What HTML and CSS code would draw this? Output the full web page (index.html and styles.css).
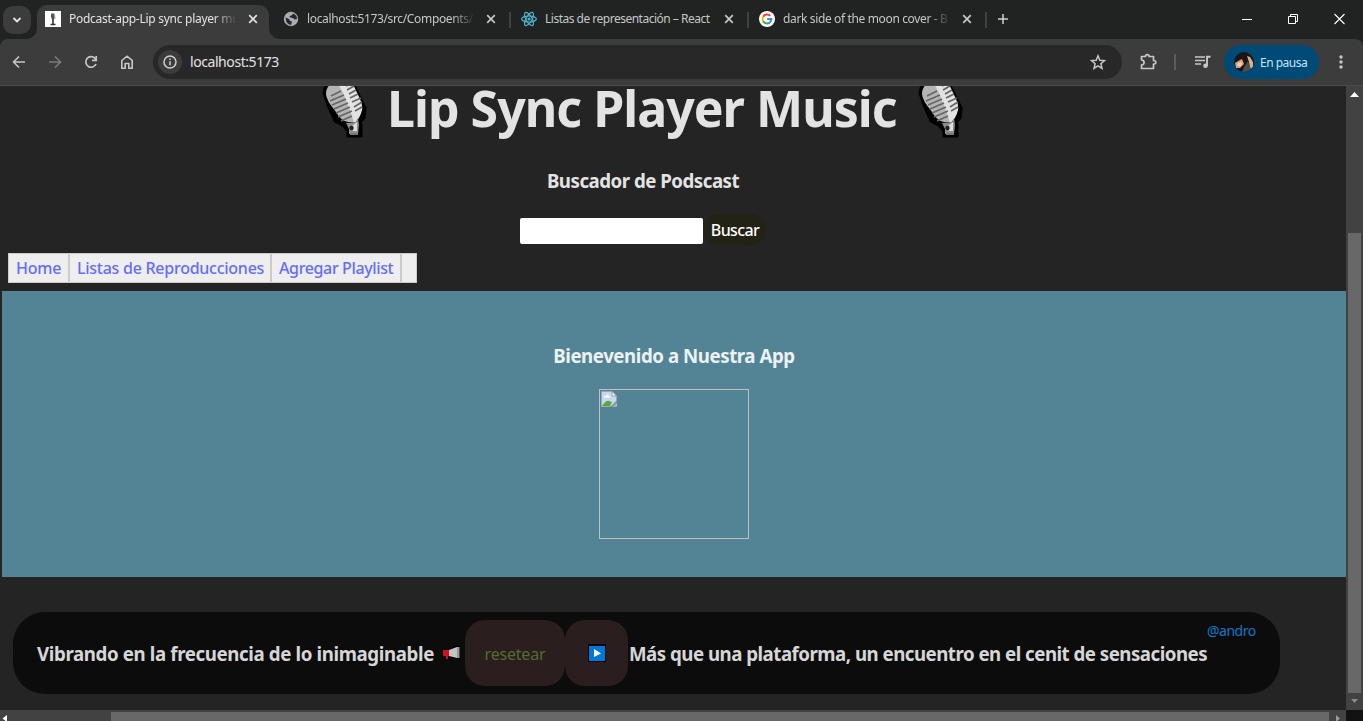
FILE: index.html
```html
<!DOCTYPE html>
<html lang="es">
<head>
<meta charset="utf-8">
<title>Podcast-app-Lip sync player music</title>
<link rel="stylesheet" href="styles.css">
</head>
<body>
<svg class="defs" width="0" height="0">
  <symbol id="x" viewBox="0 0 10 10"><path d="M1.2 1.2 8.8 8.8M8.800 1.200 1.200 8.800" fill="none" stroke="currentColor" stroke-width="1.700"/></symbol>
  <symbol id="mic" viewBox="0 0 46 66">
    <path d="M13 8 29 8 35 20 43 36 42 46 38 50 39 53V64H26V59L22 54 13 49 6 33 2 21 4 12Z" fill="#000" stroke="#000" stroke-width="3" stroke-linejoin="round"/>
    <path d="M4 22C4 12 13 9 18 10L24 20 31 35 34 50H26Q19 49 14 40Q4 28 4 22Z" fill="#b4b4b4"/>
    <path d="M14 8 29 8 38 27Q41 34 40 38Q38 47 32 51L28 38 21 21Z" fill="#e2e2e2"/>
    <path d="m24 51 10-1 2-4 1 7-1 9h-9v-5Z" fill="#8d8d8d"/><path d="m30 54 5-4v9h-4Z" fill="#ddd"/><circle cx="29.500" cy="56" r="2.200" fill="#222"/><path d="M28 61h8v2h-8Z" fill="#777"/>
    <path d="m9 24 10-5M8 29l14-6M10 33l14-6M12 37l14-6M14 41l14-6M16 45l14-6M19 49l11-5M24 14l6-3M25 18l7-4M27 22l7-4M28 26l8-4M30 30l9-4M32 35l8-5M33 39l7-4" stroke="#666" stroke-width="1.700"/>
  </symbol>
</svg>
<div class="tabstrip">
  <div class="tabsearch"><svg width="10" height="8" viewBox="0 0 10 8"><path d="m1.500 2 3.500 3.500L8.500 2" fill="none" stroke="#e3e3e3" stroke-width="1.800"/></svg></div>
  <div class="tab active">
    <svg class="fav" viewBox="0 0 16 16"><path fill="#fff" d="M0 0h16v16H0z"/><path d="M6 2.500h3l1 3-1 3H7L6 6Z" fill="#555"/><path d="M8 8v5M5.500 13.500h5" stroke="#333" stroke-width="1.600"/><path d="M9.500 3 10 8" stroke="#aaa"/></svg>
    <span class="label l1">Podcast-app-Lip sync player mu</span><svg class="x"><use href="#x"/></svg>
  </div>
  <div class="tab">
    <svg class="fav" viewBox="0 0 16 16"><circle cx="8" cy="8" r="7.200" fill="#a9adb3"/><path d="M2.500 6.500 6 8l1 2 2 .5-1 3.500q-5-.500-5.500-7.500ZM8 2l2 .5-1 1.800L6.500 5 7 6.500l3 .500 1.500 1.500 2.500-.500Q14 3 8 2Z" fill="#252827"/></svg>
    <span class="label l2">localhost:5173/src/Compoents/</span><svg class="x"><use href="#x"/></svg>
  </div>
  <i class="sep"></i>
  <div class="tab">
    <svg class="fav" viewBox="0 0 16 16" fill="none" stroke="#4fb3cb" stroke-width="1.200"><ellipse cx="8" cy="8" rx="7.400" ry="3"/><ellipse cx="8" cy="8" rx="7.400" ry="3" transform="rotate(60 8 8)"/><ellipse cx="8" cy="8" rx="7.400" ry="3" transform="rotate(120 8 8)"/><circle cx="8" cy="8" r="1" fill="#4fb3cb"/></svg>
    <span class="label l3">Listas de representación – React</span><svg class="x"><use href="#x"/></svg>
  </div>
  <i class="sep"></i>
  <div class="tab">
    <svg class="fav" viewBox="0 0 16 16" fill="none" stroke-width="2"><circle cx="8" cy="8" r="8" fill="#fff"/><path d="M4.200 5.800A4.400 4.400 0 0 1 11.200 4.900" stroke="#ea4335"/><path d="M4.200 5.800a4.400 4.400 0 0 0 0 4.400" stroke="#fbbc05"/><path d="M4.200 10.200a4.400 4.400 0 0 0 6.600 1.300" stroke="#34a853"/><path d="M10.800 11.500Q12.400 10 12.400 8H8.200" stroke="#4285f4"/></svg>
    <span class="label l4">dark side of the moon cover - B</span><svg class="x"><use href="#x"/></svg>
  </div>
  <i class="sep"></i>
  <svg class="plus" width="12" height="12" viewBox="0 0 12 12"><path d="M6 1v10M1 6h10" stroke="#d0d2d1" stroke-width="1.500"/></svg>
  <div class="winbtns">
    <svg width="10" height="12" viewBox="0 0 10 12"><path d="M0 6.500h10" stroke="#fff"/></svg>
    <svg width="10" height="12" viewBox="0 0 10 12" fill="none" stroke="#fff"><path d="M.5 3.500h7v7h-7zM2.500 3.500v-2h7v7h-2"/></svg>
    <svg width="11" height="12" viewBox="0 0 11 12"><path d="m.5 1 10 10m0-10-10 10" stroke="#fff" stroke-width="1.100"/></svg>
  </div>
</div>
<div class="toolbar">
  <div class="navicons">
    <svg width="14" height="14" viewBox="0 0 14 14" fill="none" stroke="#c7c7c7" stroke-width="1.600"><path d="M13 7H2M7 1.500 1.500 7 7 12.500"/></svg>
    <svg width="14" height="14" viewBox="0 0 14 14" fill="none" stroke="#7b7b7b" stroke-width="1.600"><path d="M1 7h11M7 1.500 12.500 7 7 12.500"/></svg>
    <svg width="14" height="14" viewBox="0 0 14 14" fill="none" stroke="#c7c7c7" stroke-width="1.700"><path d="M12 9A5.300 5.300 0 1 1 11 3.300L12.300 5"/><path d="M12.200 1v4.300H8"/></svg>
    <svg width="14" height="14" viewBox="0 0 14 14" fill="none" stroke="#c7c7c7" stroke-width="1.600"><path d="M1.800 5.500 7 1.200l5.200 4.300v7.700H8.800V8.500H5.200v4.700H1.800Z"/></svg>
  </div>
  <div class="omnibox">
    <div class="info"><svg width="14" height="14" viewBox="0 0 14 14" fill="none" stroke="#d0d0d0" stroke-width="1.500"><circle cx="7" cy="7" r="6"/><path d="M7 6.200v4M7 3.500v1.500"/></svg></div>
    <span class="url">localhost:5173</span>
    <svg class="star" width="16" height="16" viewBox="0 0 16 16" fill="none" stroke="#c7c7c7" stroke-width="1.500"><path d="m8 1.800 1.800 4.400 4.700.4-3.600 3.100 1.100 4.600L8 11.800l-4 2.500 1.100-4.600L1.500 6.600l4.700-.4Z"/></svg>
  </div>
  <svg class="ext" width="17" height="17" viewBox="0 0 17 17" fill="none" stroke="#c7c7c7" stroke-width="1.700"><path d="M1.500 3.500H5.500a1.800 1.800 0 0 1 3.600 0h4.400v4q2.300 0 2.300 1.800T13.500 11v4.500h-12V12q2.600-.500 2.600-2.600T1.500 7Z" stroke-linejoin="round"/></svg>
  <i class="tsep"></i>
  <svg class="media" width="16" height="14" viewBox="0 0 16 14"><path d="M0 2h10M0 5.500h10M0 9h6" stroke="#c7c7c7" stroke-width="1.600"/><path d="M12 11V1.800h3.500" fill="none" stroke="#c7c7c7" stroke-width="1.900"/><circle cx="10.500" cy="10.700" r="2.300" fill="#c7c7c7"/></svg>
  <div class="profile">
    <svg width="20" height="20" viewBox="0 0 20 20"><clipPath id="c"><circle cx="10" cy="10" r="10"/></clipPath><g clip-path="url(#c)"><path fill="#1b1517" d="M0 0h20v20H0z"/><path d="M1 11 6 8l2-1 2 5-4 4H2Z" fill="#d9a083"/><path d="m4 11 4-1-1 4H3Z" fill="#f3d0b8"/><path d="m13 4 3 1 3 5v6l-3 1-1-7Z" fill="#d9b087"/><path d="M10 15l4-6 3 8-3 3H8Z" fill="#4b4f53"/></g></svg>
    <span>En pausa</span>
  </div>
  <svg class="dots" width="4" height="14" viewBox="0 0 4 14" fill="#c7c7c7"><circle cx="2" cy="2" r="1.700"/><circle cx="2" cy="7" r="1.700"/><circle cx="2" cy="12" r="1.700"/></svg>
</div>
<div class="window">
  <main class="page">
    <header class="header">
      <h1><svg width="46" height="66"><use href="#mic"/></svg><span>Lip Sync Player Music</span><svg width="46" height="66"><use href="#mic"/></svg></h1>
      <h3><span class="t-find">Buscador de Podscast</span></h3>
      <form class="search"><input type="text" aria-label="Buscar"><button type="button">Buscar</button></form>
    </header>
    <nav class="nav"><a class="n1">Home</a><a class="n2">Listas de Reproducciones</a><a class="n3">Agregar Playlist</a><a class="n4"></a></nav>
    <section class="panel">
      <h3><span class="t-welcome">Bienevenido a Nuestra App</span></h3>
      <div class="cover"><svg width="16" height="16" viewBox="0 0 16 16"><path d="M.5.500H11L15.500 5v5L10 15.500H.5Z" fill="#c5d9f6" stroke="#a7a7a7"/><path d="M1 15q4-6 7-5l3 1-2 4Z" fill="#56aa38"/><path d="M3 6q0-2 2-1 1-3 3 0 2 0 1 1.500H3Z" fill="#fff"/><path d="M11 .5V5h4.500Z" fill="#fff" stroke="#999"/><path d="m12 15.500 3.500-3.500v3.500Z" fill="#8fc27a" stroke="#b0b0b0"/></svg></div>
    </section>
    <footer class="player">
      <span class="p1">Vibrando en la frecuencia de lo inimaginable</span>
      <svg class="horn" width="20" height="16" viewBox="0 0 20 16"><path d="M1 4h6L16 0h3v14h-4l-7-2v3H4l-1-4H1Z" fill="#000"/><path d="M2 5h6v6H7v3H5v-3H2Z" fill="#d1101d"/><path d="m8 5 8-3v11l-8-2Z" fill="#c4c4c4"/><path d="M16 2h2.500v11H16Z" fill="#999"/></svg>
      <button class="reset" type="button"><span>resetear</span></button><button class="play" type="button" aria-label="play"><svg width="18" height="18" viewBox="0 0 18 18"><path d="M0 0h18v18H0z"/><path d="M1 2h16v15H1z" fill="#0078d7"/><path d="m6 5 7 4.500L6 13Z" fill="#fff"/></svg></button>
      <span class="p2">Más que una plataforma, un encuentro en el cenit de sensaciones</span>
      <a class="author">@andro</a>
    </footer>
  </main>
  <div class="vbar"><svg width="17" height="17"><path d="m4 11 4.500-5 4.500 5Z" fill="#fff"/></svg><i></i><svg width="17" height="17"><path d="m5 6 3.500 4L12 6Z" fill="#8b8b8b"/></svg></div>
  <div class="hbar"><svg width="17" height="11"><path d="M7 5v7L2.500 8.500Z" fill="#fff"/></svg><i></i><svg width="17" height="11"><path d="M7 5v7L11 8.500Z" fill="#999"/></svg></div>
  <div class="corner"></div>
</div>
</body>
</html>
```
FILE: styles.css
```css
* { box-sizing: border-box; }
body { margin: 0; width: 1363px; height: 721px; overflow: hidden; background: linear-gradient(#202322 60px, #242424 60px); color: #e3e3e3; font-family: "Noto Sans", "Open Sans", sans-serif; display: flex; flex-direction: column; }
svg { display: block; flex: none; }
.defs { position: absolute; }
h1, h3 { margin: 0; }

.tabstrip { height: 39px; flex: none; background: #202322; display: flex; align-items: center; padding-left: 3px; }
.tabsearch { width: 28px; height: 28px; margin-right: 6px; border-radius: 10px; background: #3c3c3c; display: flex; align-items: center; justify-content: center; }
.tab { width: 232px; height: 34px; padding: 0 11px 6px 8px; display: flex; align-items: center; align-self: flex-end; color: #c5c7c6; }
.tab.active { background: #3c3c3c; border-radius: 10px 10px 0 0; color: #e3e3e3; margin-right: 6px; position: relative; }
.tab.active::before, .tab.active::after { content: ""; position: absolute; bottom: 0; width: 10px; height: 10px; }
.tab.active::before { left: -10px; background: radial-gradient(circle at 0 0, transparent 9.5px, #3c3c3c 10px); }
.tab.active::after { right: -10px; background: radial-gradient(circle at 100% 0, transparent 9.5px, #3c3c3c 10px); }
.fav { width: 16px; height: 16px; margin-right: 8px; }
.label { width: 170px; font-size: 12px; line-height: 18px; white-space: nowrap; -webkit-mask-image: linear-gradient(90deg, #000 145px, transparent 168px); mask-image: linear-gradient(90deg, #000 145px, transparent 168px); }
.l1 { letter-spacing: -.27px; }
.l2 { letter-spacing: -.35px; }
.l3 { letter-spacing: -.5px; -webkit-mask-image: none; mask-image: none; }
.l4 { letter-spacing: -.36px; }
.x { width: 10px; height: 10px; margin-left: auto; }
.sep { width: 2px; height: 16px; background: #404241; margin: 0 2px; }
.plus { margin-left: 8px; margin-top: -1px; }
.winbtns { margin-left: auto; display: flex; gap: 36px; padding-right: 18px; margin-top: -1px; }

.toolbar { height: 47px; flex: none; background: #3c3c3c; border-bottom: 1px solid #4a4a4a; border-radius: 8px 8px 0 0; display: flex; align-items: center; padding-left: 12px; }
.navicons { display: flex; gap: 22px; }
.omnibox { width: 969px; height: 34px; margin-left: 19px; border-radius: 17px; background: #282828; display: flex; align-items: center; padding: 0 16px 0 5px; }
.info { width: 24px; height: 24px; border-radius: 50%; background: #3c3c3c; display: flex; align-items: center; justify-content: center; }
.url { margin-left: 8px; font-size: 14px; line-height: 20px; letter-spacing: -.43px; }
.star { margin-left: auto; }
.ext { margin-left: 18px; margin-top: -2px; }
.tsep { width: 2px; height: 16px; background: #5c5c5c; margin-left: 17px; }
.media { margin-left: 19px; }
.profile { width: 95px; height: 34px; margin-left: 13px; border-radius: 17px; background: #004a77; color: #c2e7ff; font-size: 12px; letter-spacing: -.5px; display: flex; align-items: center; gap: 6px; padding-left: 10px; white-space: nowrap; }
.dots { margin-left: 20px; }

.window { flex: 1; min-height: 0; display: grid; grid-template: 624px 11px / 1346px 17px; }
.page { overflow: hidden; background: #242424; }
.header { width: 1286px; text-align: center; }
.header h1 { height: 41px; font-size: 50px; line-height: 44px; letter-spacing: -.97px; display: flex; justify-content: center; gap: 20px; white-space: nowrap; }
.header h1 svg { margin-top: -14px; }
.header h1 span { width: 510px; text-align: left; text-indent: -1px; }
h3 { font-size: 18.7px; line-height: 28px; white-space: nowrap; }
.header h3 { margin-top: 40px; }
.t-find { letter-spacing: -.5px; }
.t-welcome { letter-spacing: -.45px; }
.search { height: 31px; margin-top: 19px; display: flex; align-items: center; justify-content: center; }
.search input { width: 183px; height: 26px; border: 0; border-radius: 2px; padding: 0; background: #fff; margin-top: 3px; }
.search button { width: 62px; height: 31px; margin-left: 1px; border: 0; border-radius: 15px; padding: 2px 0 0; background: #222215; color: #fff; font: 500 16px/29px "Noto Sans", sans-serif; letter-spacing: -.6px; }
.nav { display: flex; margin: 8px 0 0 8px; height: 30px; font-size: 16px; font-weight: 500; line-height: 29px; color: #646cff; white-space: nowrap; }
.nav a { background: #eee; border: 1px solid #ccc; padding-left: 7px; }
.n1 { width: 61px; letter-spacing: -.25px; }
.n2 { width: 202px; letter-spacing: -.26px; }
.n3 { width: 130px; letter-spacing: -.37px; }
.n4 { width: 16px; }
.panel { margin: 8px 0 0 2px; height: 286px; background: #538495; color: #ecf1f3; text-align: center; padding-top: 51px; }
.cover { width: 150px; height: 150px; margin: 19px auto 0; border: 1px solid #c0c0c0; padding: 1px; }
.player { width: 1267px; height: 82px; margin: 35px 0 0 13px; border-radius: 32px; background: #0c0c0c; display: flex; align-items: center; padding-left: 24px; font-size: 18.7px; font-weight: 700; color: #d6d6d6; white-space: nowrap; }
.p1 { width: 404px; letter-spacing: -.38px; }
.p2 { width: 578px; margin-left: 1px; letter-spacing: -.51px; }
.horn { margin-right: 4px; }
.player button { height: 66px; border: 0; border-radius: 20px; background: #2a1e1e; padding: 0; display: flex; align-items: center; justify-content: center; }
.player .reset { width: 100px; padding-top: 2px; color: #556b2f; font: 16px "Noto Sans", sans-serif; letter-spacing: -.2px; }
.play { width: 63px; }
.author { align-self: flex-start; margin-top: 9px; font-size: 14px; line-height: 20px; font-weight: 400; letter-spacing: -.5px; color: #0e7ac8; }
.vbar { background: #424242; display: flex; flex-direction: column; align-items: center; justify-content: space-between; }
.vbar i { width: 13px; height: 460px; margin-top: 130px; background: #686868; }
.hbar { background: #424242; display: flex; }
.hbar i { width: 1218px; height: 9px; margin: 2px 0 0 94px; background: #686868; }
.corner { background: #121212; }
```
